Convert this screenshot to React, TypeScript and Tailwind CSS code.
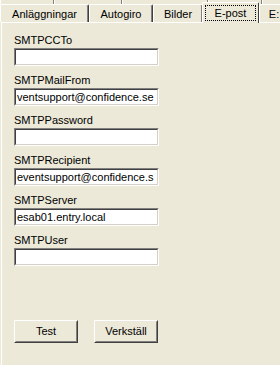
import React from 'react';

const backTabs = [54, 68, 86, 54, 40];

const tabs = [
  { label: 'Anläggningar', width: 89 },
  { label: 'Autogiro', width: 64 },
  { label: 'Bilder', width: 50 },
  { label: 'E-post', width: 57, active: true },
  { label: 'E:', width: 30 },
];

const fields = [
  { label: 'SMTPCCTo', value: '' },
  { label: 'SMTPMailFrom', value: 'ventsupport@confidence.se' },
  { label: 'SMTPPassword', value: '' },
  { label: 'SMTPRecipient', value: 'eventsupport@confidence.s' },
  { label: 'SMTPServer', value: 'esab01.entry.local' },
  { label: 'SMTPUser', value: '' },
];

const Field = ({ label, value }: { label: string; value: string }) => (
  <div className="flex flex-col">
    <span className="leading-[13px] h-[13px] mb-[1px]">{label}</span>
    <div className="w-[145px] h-[18px] border border-t-[#808080] border-l-[#808080] border-b-white border-r-white">
      <div className="h-full border border-t-[#404040] border-l-[#404040] border-b-[#D4D0C8] border-r-[#D4D0C8] bg-white flex items-center overflow-hidden whitespace-nowrap pl-[1px] leading-[13px]">
        {value}
      </div>
    </div>
  </div>
);

const Button = ({ children }: { children: React.ReactNode }) => (
  <button className="w-[64px] h-[23px] border border-t-white border-l-white border-b-[#404040] border-r-[#404040] bg-[#ECE9D8] p-0">
    <div className="h-full border border-t-[#ECE9D8] border-l-[#ECE9D8] border-b-[#808080] border-r-[#808080] flex items-center justify-center leading-[13px]">
      {children}
    </div>
  </button>
);

export default function App() {
  return (
    <div className="w-[280px] h-[365px] bg-[#ECE9D8] overflow-hidden text-[11px] text-black font-['Liberation_Sans',Arial,sans-serif]">
      {/* back row of tabs */}
      <div className="flex h-[4px] overflow-hidden">
        {backTabs.map((w, i) => (
          <div key={i} style={{ width: w }} className="h-full shrink-0 border-l border-white border-r border-r-[#808080]" />
        ))}
      </div>

      {/* front row of tabs */}
      <div className="flex items-end h-[18px] relative z-10">
        {tabs.map((t) =>
          t.active ? (
            <div
              key={t.label}
              style={{ width: t.width }}
              className="shrink-0 h-[21px] -mb-[1px] -ml-[1px] bg-[#ECE9D8] border-t border-l border-white border-r border-r-[#404040] rounded-t-[2px] flex items-center justify-center"
            >
              <span className="border border-dotted border-black w-[51px] h-[16px] leading-[13px] flex items-center justify-center">{t.label}</span>
            </div>
          ) : (
            <div
              key={t.label}
              style={{ width: t.width }}
              className="shrink-0 h-[18px] border-t border-l border-white border-r border-r-[#404040] shadow-[inset_-1px_0_0_#808080] rounded-t-[2px] flex items-center justify-center whitespace-nowrap overflow-hidden leading-[13px] pt-[1px]"
            >
              {t.label}
            </div>
          )
        )}
      </div>

      {/* panel */}
      <div className="ml-[1px] h-[343px] border-t border-l border-white flex flex-col pl-[12px] pt-[11px]">
        <div className="flex flex-col gap-[8px]">
          {fields.map((f) => (
            <Field key={f.label} label={f.label} value={f.value} />
          ))}
        </div>
        <div className="flex gap-[16px] mt-[54px]">
          <Button>Test</Button>
          <Button>Verkställ</Button>
        </div>
      </div>
    </div>
  );
}
